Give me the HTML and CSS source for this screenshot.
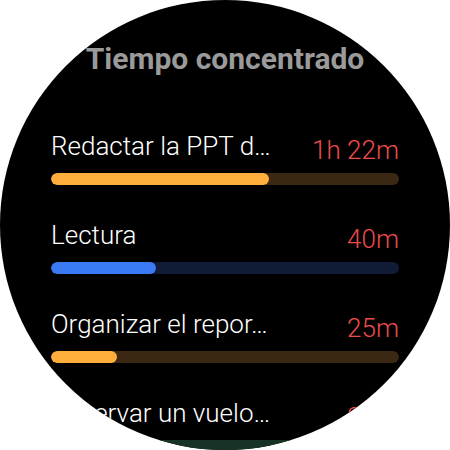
FILE: index.html
```html
<!DOCTYPE html>
<html lang="es">
<head>
<meta charset="utf-8">
<title>Tiempo concentrado</title>
<link rel="stylesheet" href="styles.css">
</head>
<body>
<div class="watch">
  <h1 class="title">Tiempo concentrado</h1>
  <ul class="list">
    <li class="row">
      <div class="head"><span class="name">Redactar la PPT d…</span><span class="time">1h 22m</span></div>
      <div class="track track-orange"><div class="fill fill-orange" style="width:62.6%"></div></div>
    </li>
    <li class="row">
      <div class="head"><span class="name">Lectura</span><span class="time">40m</span></div>
      <div class="track track-blue"><div class="fill fill-blue" style="width:30.2%"></div></div>
    </li>
    <li class="row">
      <div class="head"><span class="name">Organizar el repor…</span><span class="time">25m</span></div>
      <div class="track track-orange"><div class="fill fill-orange" style="width:19%"></div></div>
    </li>
    <li class="row">
      <div class="head"><span class="name">Reservar un vuelo…</span><span class="time">30m</span></div>
      <div class="track track-green"><div class="fill fill-green" style="width:8%"></div></div>
    </li>
  </ul>
</div>
</body>
</html>
```

FILE: styles.css
```css
* { box-sizing: border-box; }
html, body { margin: 0; padding: 0; background: #fff; }
.watch {
  width: 450px;
  height: 450px;
  border-radius: 50%;
  background: #000;
  overflow: hidden;
  padding-top: 42px;
  font-family: Roboto, "Noto Sans", sans-serif;
}
.title {
  margin: 0;
  text-align: center;
  font-weight: 700;
  font-size: 30px;
  line-height: 34px;
  color: #9a9a9a;
}
.list {
  list-style: none;
  margin: 55px 0 0;
  padding: 0 51px;
  display: flex;
  flex-direction: column;
  gap: 35px;
}
.head {
  display: flex;
  justify-content: space-between;
  align-items: flex-start;
  height: 30px;
  font-weight: 300;
  font-size: 26px;
  line-height: 30px;
}
.name { color: #fff; white-space: nowrap; }
.time { color: #ee4b4b; padding-top: 4px; white-space: nowrap; }
.track {
  margin-top: 12px;
  height: 12px;
  border-radius: 6px;
  overflow: hidden;
}
.fill { height: 100%; border-radius: 6px; }
.track-orange { background: #3a2812; }
.fill-orange { background: #ffad3b; }
.track-blue { background: #101b36; }
.fill-blue { background: #3b7af5; }
.track-green { background: #163325; }
.fill-green { background: #2fb56a; }
```
